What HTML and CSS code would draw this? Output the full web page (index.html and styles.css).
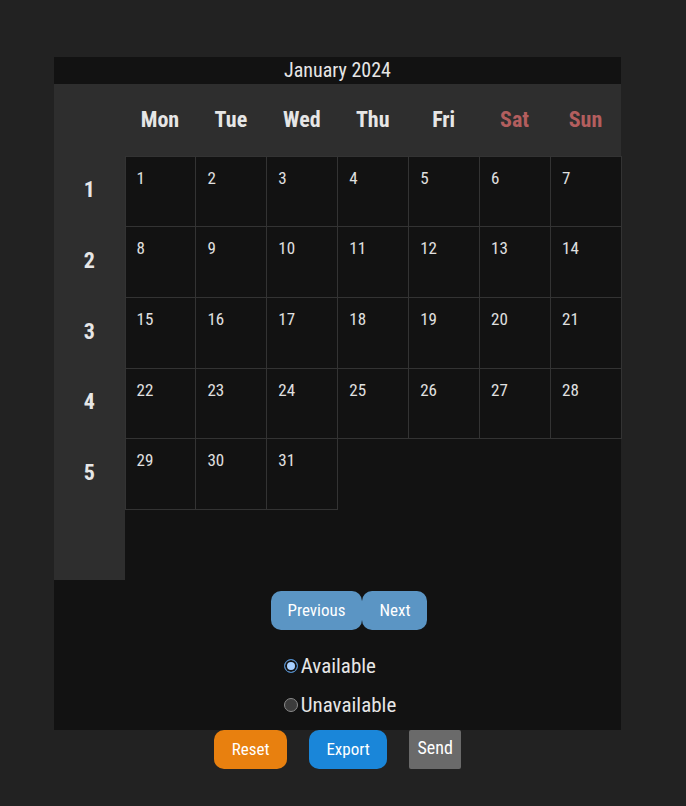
FILE: index.html
```html
<!DOCTYPE html>
<html>
<head>
<meta charset="utf-8">
<link rel="stylesheet" href="styles.css">
</head>
<body>
<div class="page">
  <div class="calendar">
    <div class="title">January 2024</div>
    <div class="grid">
      <div class="corner"></div>
      <div class="dayname">Mon</div>
      <div class="dayname">Tue</div>
      <div class="dayname">Wed</div>
      <div class="dayname">Thu</div>
      <div class="dayname">Fri</div>
      <div class="dayname weekend">Sat</div>
      <div class="dayname weekend">Sun</div>

      <div class="week">1</div>
      <div class="day">1</div><div class="day">2</div><div class="day">3</div><div class="day">4</div><div class="day">5</div><div class="day">6</div><div class="day">7</div>
      <div class="week">2</div>
      <div class="day">8</div><div class="day">9</div><div class="day">10</div><div class="day">11</div><div class="day">12</div><div class="day">13</div><div class="day">14</div>
      <div class="week">3</div>
      <div class="day">15</div><div class="day">16</div><div class="day">17</div><div class="day">18</div><div class="day">19</div><div class="day">20</div><div class="day">21</div>
      <div class="week">4</div>
      <div class="day">22</div><div class="day">23</div><div class="day">24</div><div class="day">25</div><div class="day">26</div><div class="day">27</div><div class="day">28</div>
      <div class="week">5</div>
      <div class="day">29</div><div class="day">30</div><div class="day">31</div>
      <div class="empty"></div><div class="empty"></div><div class="empty"></div><div class="empty"></div>
      <div class="week"></div>
    </div>
    <div class="nav">
      <button class="navbtn">Previous</button><button class="navbtn">Next</button>
    </div>
    <div class="radios">
      <div class="radiolist">
        <label class="radio"><span class="dot on"></span>Available</label>
        <label class="radio"><span class="dot"></span>Unavailable</label>
      </div>
    </div>
  </div>
  <div class="actions">
    <button class="act reset">Reset</button>
    <button class="act export">Export</button>
    <button class="act send">Send</button>
  </div>
</div>
</body>
</html>
```

FILE: styles.css
```css
html, body {
  margin: 0;
  padding: 0;
  background: #222222;
}
body {
  font-family: "Roboto Condensed", "Liberation Sans Narrow", "DejaVu Sans Condensed", sans-serif;
  color: #e6e6e6;
}
* {
  box-sizing: border-box;
}
.page {
  width: 621px;
  padding: 57px 0 0 54px;
}
.calendar {
  background: #121212;
  display: flex;
  flex-direction: column;
}
.title {
  height: 27px;
  line-height: 27px;
  text-align: center;
  font-size: 20px;
  color: #e6e6e6;
}
.grid {
  display: grid;
  grid-template-columns: 70.5px repeat(7, 70.93px);
  grid-template-rows: 71.6px repeat(6, 70.667px);
}
.corner {
  background: #2e2e2e;
}
.dayname {
  background: #2e2e2e;
  display: flex;
  align-items: center;
  justify-content: center;
  font-weight: bold;
  font-size: 22px;
  color: #e6e6e6;
}
.dayname.weekend {
  color: #b35e5e;
}
.week {
  background: #2e2e2e;
  display: flex;
  align-items: center;
  justify-content: center;
  font-weight: bold;
  font-size: 22px;
  color: #e6e6e6;
  padding-bottom: 2px;
}
.day {
  border: 1px solid #333333;
  margin: 0 -1px -1px 0;
  padding: 11px 0 0 11px;
  font-size: 17px;
  color: #e0e0e0;
}
.nav {
  display: flex;
  justify-content: center;
  padding: 11px 0 0 23px;
}
.navbtn {
  font-family: inherit;
  font-size: 17px;
  color: #ffffff;
  background: #5b95c4;
  border: none;
  border-radius: 10px;
  height: 39px;
  padding: 0 17px;
}
.radios {
  display: flex;
  justify-content: center;
  padding: 24px 0 13px 5px;
}
.radiolist {
  display: flex;
  flex-direction: column;
  align-items: flex-start;
  gap: 15px;
}
.radio {
  display: flex;
  align-items: center;
  gap: 3px;
  font-size: 21px;
  height: 24px;
  color: #e6e6e6;
}
.dot {
  width: 14px;
  height: 14px;
  border-radius: 50%;
  background: #3c3c3c;
  border: 1px solid #8a8a8a;
  margin-top: 1px;
}
.dot.on {
  background: #a8d0ff;
  border: 1px solid #4a88c8;
  box-shadow: inset 0 0 0 2px #121212;
}
.actions {
  display: flex;
  justify-content: center;
  gap: 22px;
}
.act {
  font-family: inherit;
  font-size: 17px;
  color: #ffffff;
  border: none;
  height: 39px;
  border-radius: 10px;
  padding: 0 17.5px;
}
.reset { background: #e8800f; }
.export { background: #1a86d9; }
.send {
  background: #6a6a6a;
  border-radius: 2px;
  padding: 0 8px 4px;
  font-size: 18px;
}
```
